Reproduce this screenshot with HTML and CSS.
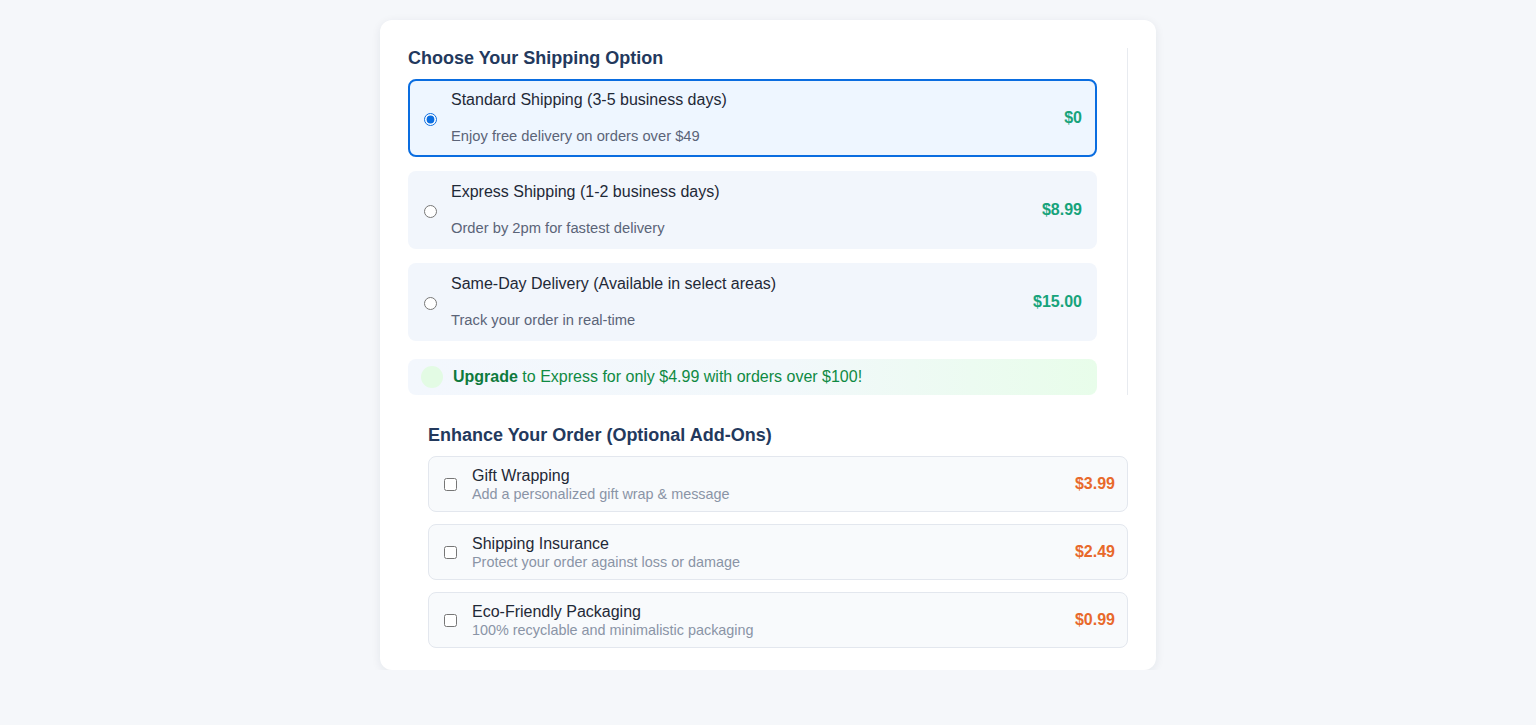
FILE: index.html
```html
<!DOCTYPE html>
<html lang="en">
<head>
<meta charset="utf-8">
<title>Shipping Options</title>
<link rel="stylesheet" href="styles.css">
</head>
<body>
<main class="card">
  <section class="shipping">
    <h2 class="heading">Choose Your Shipping Option</h2>
    <div class="options">
      <label class="option selected">
        <input type="radio" name="ship" checked>
        <span class="opt-text">
          <span class="opt-title">Standard Shipping (3-5 business days)</span>
          <span class="opt-desc">Enjoy free delivery on orders over $49</span>
        </span>
        <span class="opt-price">$0</span>
      </label>
      <label class="option">
        <input type="radio" name="ship">
        <span class="opt-text">
          <span class="opt-title">Express Shipping (1-2 business days)</span>
          <span class="opt-desc">Order by 2pm for fastest delivery</span>
        </span>
        <span class="opt-price">$8.99</span>
      </label>
      <label class="option">
        <input type="radio" name="ship">
        <span class="opt-text">
          <span class="opt-title">Same-Day Delivery (Available in select areas)</span>
          <span class="opt-desc">Track your order in real-time</span>
        </span>
        <span class="opt-price">$15.00</span>
      </label>
    </div>
    <div class="upgrade">
      <span class="dot"></span>
      <span class="upgrade-text"><strong>Upgrade</strong> to Express for only $4.99 with orders over $100!</span>
    </div>
  </section>
  <section class="addons">
    <h2 class="heading">Enhance Your Order (Optional Add-Ons)</h2>
    <div class="addon-list">
      <label class="addon">
        <input type="checkbox">
        <span class="addon-text">
          <span class="addon-title">Gift Wrapping</span>
          <span class="addon-desc">Add a personalized gift wrap &amp; message</span>
        </span>
        <span class="addon-price">$3.99</span>
      </label>
      <label class="addon">
        <input type="checkbox">
        <span class="addon-text">
          <span class="addon-title">Shipping Insurance</span>
          <span class="addon-desc">Protect your order against loss or damage</span>
        </span>
        <span class="addon-price">$2.49</span>
      </label>
      <label class="addon">
        <input type="checkbox">
        <span class="addon-text">
          <span class="addon-title">Eco-Friendly Packaging</span>
          <span class="addon-desc">100% recyclable and minimalistic packaging</span>
        </span>
        <span class="addon-price">$0.99</span>
      </label>
    </div>
  </section>
</main>
</body>
</html>
```
FILE: styles.css
```css
* { box-sizing: border-box; }
html, body { margin: 0; padding: 0; }
body {
  background: #f5f7fa;
  font-family: "Liberation Sans", Arial, Helvetica, sans-serif;
  color: #1f2937;
  padding-top: 20px;
}
.card {
  width: 776px;
  margin: 0 auto;
  background: #ffffff;
  border-radius: 12px;
  box-shadow: 0 2px 10px rgba(30, 41, 59, 0.08);
  padding: 28px 28px 22px;
}
.heading {
  margin: 0 0 11px;
  font-size: 18px;
  line-height: 20px;
  font-weight: 700;
  color: #23395d;
}
.shipping {
  padding-right: 30px;
  border-right: 1px solid #e8ebf0;
}
.options {
  display: flex;
  flex-direction: column;
  gap: 14px;
}
.option {
  display: flex;
  align-items: center;
  gap: 14px;
  padding: 9px 13px 9px 14px;
  border: 2px solid transparent;
  border-radius: 8px;
  background: #f2f6fc;
  cursor: pointer;
}
.option.selected {
  border-color: #0a6de0;
  background: #eef6ff;
}
.option input {
  margin: 2px 0 0;
  width: 13px;
  height: 13px;
  flex: none;
  accent-color: #0a6de0;
}
.opt-text {
  flex: 1;
  display: flex;
  flex-direction: column;
}
.opt-title {
  font-size: 16px;
  line-height: 20px;
  color: #1f2937;
}
.opt-desc {
  margin-top: 16px;
  font-size: 14.72px;
  line-height: 20px;
  color: #5b6478;
}
.opt-price {
  font-size: 16px;
  font-weight: 700;
  color: #17a37b;
}
.upgrade {
  margin-top: 18px;
  display: flex;
  align-items: center;
  gap: 10px;
  height: 36px;
  padding: 0 13px;
  border-radius: 8px;
  background: linear-gradient(90deg, #f3f7fd 0%, #f2f8fb 55%, #e8fdea 100%);
}
.dot {
  width: 22px;
  height: 22px;
  border-radius: 50%;
  background: #e3fbe4;
  flex: none;
}
.upgrade-text {
  font-size: 16px;
  color: #0f8a43;
}
.upgrade-text strong {
  color: #0e7a3d;
}
.addons {
  margin-top: 29px;
  padding-left: 20px;
}
.addons .heading {
  line-height: 22px;
  margin-bottom: 10px;
}
.addon-list {
  display: flex;
  flex-direction: column;
  gap: 12px;
}
.addon {
  display: flex;
  align-items: center;
  gap: 15px;
  padding: 10px 12px 8px 15px;
  border: 1px solid #e3e7ee;
  border-radius: 8px;
  background: #f8fafc;
  cursor: pointer;
}
.addon input {
  margin: -2px 0 0;
  width: 13px;
  height: 13px;
  flex: none;
}
.addon-text {
  flex: 1;
  display: flex;
  flex-direction: column;
}
.addon-title {
  font-size: 16px;
  line-height: 18px;
  color: #1f2937;
}
.addon-desc {
  font-size: 14.4px;
  line-height: 18px;
  color: #8a94a6;
}
.addon-price {
  margin-top: -2px;
  font-size: 16px;
  font-weight: 700;
  color: #e8692b;
}
```
